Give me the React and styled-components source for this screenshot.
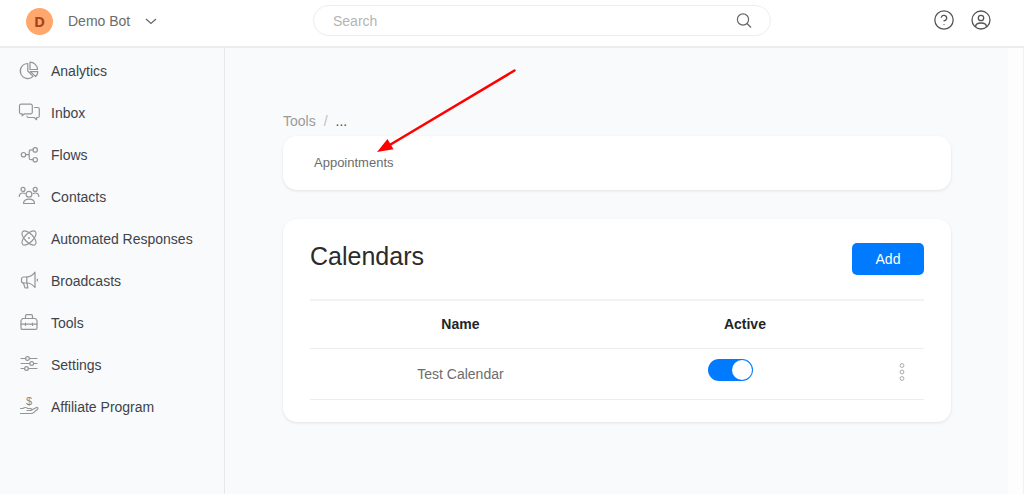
import React, { useState } from 'react'
import styled, { createGlobalStyle, ThemeProvider } from 'styled-components'
import { CircleQuestionMark } from 'lucide-react'

const theme = {
  colors: {
    blue: '#007bff',
    background: '#f9fafc',
    line: '#ededed',
    text: '#3e434a',
    muted: '#6c6c6c',
  },
}

const GlobalStyle = createGlobalStyle`
  *, *:before, *:after {
    box-sizing: border-box;
  }

  body {
    margin: 0;
    font-family: 'Liberation Sans', Arial, sans-serif;
    font-size: 14px;
    line-height: 20px;
    color: ${theme.colors.text};
    background-color: ${theme.colors.background};
  }

  button, input {
    font: inherit;
  }
`

const Page = styled.div`
  min-height: 100vh;
  display: flex;
  flex-direction: column;
`

const Header = styled.header`
  display: grid;
  grid-template-columns: 313px 1fr 253px;
  align-items: start;
  height: 48px;
  padding-top: 5px;
  background-color: #fff;
  border-bottom: 2px solid ${({ theme }) => theme.colors.line};
`

const BotButton = styled.button`
  display: flex;
  align-items: center;
  justify-self: start;
  height: 32px;
  padding: 0 0 0 26px;
  border: 0;
  background: none;
  color: ${({ theme }) => theme.colors.muted};
  cursor: pointer;
`

const Avatar = styled.span`
  width: 27px;
  height: 27px;
  margin-right: 15px;
  border-radius: 50%;
  background-color: #ffa76c;
  color: #a8431f;
  font-family: 'Open Sans', sans-serif;
  font-size: 15px;
  font-weight: 700;
  line-height: 27px;
  text-align: center;
`

const Chevron = styled.svg`
  margin-left: 15px;
`

const SearchForm = styled.form`
  display: flex;
  align-items: center;
  height: 31px;
  padding: 0 18px 0 19px;
  border: 1px solid ${({ theme }) => theme.colors.line};
  border-radius: 16px;
`

const SearchInput = styled.input`
  flex: 1;
  min-width: 0;
  padding: 0;
  border: 0;
  outline: 0;
  background: none;

  &::placeholder {
    color: #b4b4b4;
    opacity: 1;
  }
`

const IconButton = styled.button`
  display: flex;
  padding: 0;
  border: 0;
  background: none;
  color: #545454;
  cursor: pointer;
`

const HeaderActions = styled.div`
  display: flex;
  justify-content: flex-end;
  gap: 15px;
  padding: 4px 32px 0 0;
`

const Body = styled.div`
  flex: 1;
  display: flex;
`

const Sidebar = styled.nav`
  flex: 0 0 225px;
  padding: 11px 0 0 17px;
  border-right: 1px solid #e6e8ea;
`

const NavItem = styled.a`
  display: flex;
  align-items: center;
  gap: 10px;
  margin-bottom: 18px;
  color: inherit;
  text-decoration: none;
`

const NavIcon = styled.svg`
  fill: none;
  stroke: #959595;
  stroke-width: 1.2;
  stroke-linecap: round;
  stroke-linejoin: round;
`

const Dollar = styled.text`
  fill: #858585;
  stroke: none;
  font-size: 11px;
  text-anchor: middle;
`

const Main = styled.main`
  flex: 1;
  min-width: 0;
  padding: 63px 57px 24px 58px;
`

const Gutter = styled.div`
  flex: 0 0 16px;
  background-color: #fdfdfd;
  border-right: 1px solid #f2f2f2;
`

const Breadcrumb = styled.div`
  position: relative;
  display: flex;
  gap: 8px;
  margin-bottom: 5px;
  color: #4f4f4f;
`

const Crumb = styled.a`
  color: #9b9b9b;
  text-decoration: none;
`

const Slash = styled.span`
  color: #c0c0c0;
`

const Arrow = styled.svg`
  position: absolute;
  left: 89px;
  top: -45px;
  pointer-events: none;
`

const Card = styled.section`
  background-color: #fff;
  border-radius: 14px;
  box-shadow: 0 1px 3px rgba(0, 0, 0, 0.1);
`

const TabsCard = styled(Card)`
  padding: 17px 31px;
  margin-bottom: 29px;
`

const Tab = styled.a`
  display: block;
  font-size: 13px;
  color: ${({ theme }) => theme.colors.muted};
  text-decoration: none;
`

const TableCard = styled(Card)`
  padding: 24px 27px 22px;
`

const CardHeader = styled.div`
  display: flex;
  align-items: flex-start;
  justify-content: space-between;
  margin-bottom: 24px;
`

const Title = styled.h1`
  margin: 0;
  font-size: 25px;
  font-weight: 400;
  line-height: 26px;
  color: #2b2b2b;
`

const AddButton = styled.button`
  width: 72px;
  height: 32px;
  border: 0;
  border-radius: 5px;
  background-color: ${({ theme }) => theme.colors.blue};
  color: #fff;
  cursor: pointer;
`

const Table = styled.table`
  width: 100%;
  table-layout: fixed;
  border-collapse: collapse;
  text-align: center;
`

const HeadCell = styled.th`
  width: ${({ width }) => width};
  height: 48px;
  padding: 0 0 1px;
  border-top: 2px solid #f2f2f2;
  border-bottom: 1px solid ${({ theme }) => theme.colors.line};
  color: #212529;
`

const Cell = styled.td`
  height: 51px;
  padding: 0;
  border-bottom: 1px solid ${({ theme }) => theme.colors.line};
  color: ${({ theme }) => theme.colors.muted};
`

const SwitchCell = styled(Cell)`
  padding: 0 28px 8px 0;
`

const MenuCell = styled(Cell)`
  padding-bottom: 4px;
`

const Switch = styled.input`
  appearance: none;
  display: block;
  width: 45px;
  height: 22px;
  margin: 0 auto;
  padding: 1px;
  border-radius: 11px;
  background-color: ${({ checked, theme }) =>
    checked ? theme.colors.blue : '#c8c8c8'};
  cursor: pointer;

  &:before {
    content: '';
    display: block;
    width: 20px;
    height: 20px;
    margin-left: ${({ checked }) => (checked ? 'auto' : '0')};
    border-radius: 50%;
    background-color: #fff;
  }
`

const MenuButton = styled(IconButton)`
  margin: 0 auto;
`

const icons = {
  analytics: (
    <>
      <path d="M10.8 4.5a7.5 7.5 0 1 0 5.3 12.8L10.8 12Z" />
      <path d="M13 3.200a7.500 7.500 0 0 1 7.500 7.300H13Z" />
      <path d="M13.300 12.600h7.600a7.600 7.600 0 0 1-2.200 4.900Z" />
    </>
  ),
  inbox: (
    <>
      <path d="M4 3.2h9.8a1.5 1.5 0 0 1 1.5 1.5v6.6a1.5 1.5 0 0 1-1.5 1.5H7.5l-2.3 2v-2H4a1.5 1.5 0 0 1-1.5-1.5V4.7A1.5 1.5 0 0 1 4 3.2Z" />
      <path d="M17.5 6.5h3.3A1.5 1.5 0 0 1 22.3 8v7a1.5 1.5 0 0 1-1.5 1.5h-1.2v2.2l-2.500-2.200h-5.600a1.500 1.500 0 0 1-1.500-1.500" />
    </>
  ),
  flows: (
    <>
      <circle cx="6.5" cy="11.7" r="2.2" />
      <circle cx="18.2" cy="6.9" r="2.2" />
      <circle cx="18.2" cy="16.7" r="2.2" />
      <path d="M8.7 11.7h3.5M16 6.9h-2a1.8 1.8 0 0 0-1.8 1.8v6.2a1.8 1.8 0 0 0 1.8 1.8h2" />
    </>
  ),
  contacts: (
    <>
      <circle cx="12" cy="9.2" r="2.9" />
      <circle cx="6" cy="4.4" r="2" />
      <circle cx="18.2" cy="4.4" r="2" />
      <path d="M6.5 18.5c0-3 2.3-4.3 5.5-4.3s5.5 1.3 5.5 4.3Z" />
      <path d="M2.3 11.5C2.3 9 3.800 8 5.800 8c.8 0 1.500.1 2 .5M21.800 11.500c0-2.500-1.500-3.500-3.500-3.500-.8 0-1.500.1-2 .5" />
    </>
  ),
  automated: (
    <>
      <ellipse cx="12" cy="11" rx="9" ry="4.2" transform="rotate(45 12 11)" />
      <ellipse cx="12" cy="11" rx="9" ry="4.2" transform="rotate(-45 12 11)" />
      <circle cx="12" cy="11" r=".4" />
    </>
  ),
  broadcasts: (
    <>
      <path d="M9.8 8H6.5a2 2 0 0 0-2 2v2a2 2 0 0 0 2 2h3.3Z" />
      <path d="M9.8 8c3.2 0 6-1.8 8.2-4.8v15.3c-2.2-2.8-5-4.5-8.2-4.5" />
      <path d="M6.5 14l1.2 4.2c.2.5.5.7 1 .7h2.1L10 14M20.300 10v2" />
    </>
  ),
  tools: (
    <>
      <path d="M5.5 7.5h13l1.5 2v7.7a1.2 1.2 0 0 1-1.2 1.2H5.2A1.2 1.2 0 0 1 4 17.2V9.5Z" />
      <path d="M8.5 7.3V5a1.3 1.3 0 0 1 1.3-1.3h4.4A1.3 1.3 0 0 1 15.5 5v2.3" />
      <path d="M4 13.2h16M8.5 12v2.5M15.5 12v2.5" />
    </>
  ),
  settings: (
    <>
      <circle cx="10.5" cy="5.5" r="1.9" />
      <circle cx="14.7" cy="10.5" r="1.9" />
      <circle cx="9.5" cy="15.5" r="1.9" />
      <path d="M4 5.5h4.6M12.4 5.5H20M4 10.5h8.8M16.6 10.5H20M4 15.5h3.6M11.4 15.5H20" />
    </>
  ),
  affiliate: (
    <>
      <Dollar x="12" y="10">
        $
      </Dollar>
      <path d="M3.5 13.5h2.3c1.5-1.2 3.5-1.2 5 0h2.7c1.5 0 1.5 2 0 2H10M13.500 15.500l5.500-2.800c1.500-.7 2.700.5 1.500 1.600l-4.200 3.600c-.6.500-1.200.6-2 .6H3.500" />
    </>
  ),
}

const navItems = [
  { icon: 'analytics', label: 'Analytics' },
  { icon: 'inbox', label: 'Inbox' },
  { icon: 'flows', label: 'Flows' },
  { icon: 'contacts', label: 'Contacts' },
  { icon: 'automated', label: 'Automated Responses' },
  { icon: 'broadcasts', label: 'Broadcasts' },
  { icon: 'tools', label: 'Tools' },
  { icon: 'settings', label: 'Settings' },
  { icon: 'affiliate', label: 'Affiliate Program' },
]

const TopBar = () => (
  <Header>
    <BotButton type="button">
      <Avatar>D</Avatar>
      Demo Bot
      <Chevron width="12" height="8" fill="none" stroke="#666" strokeWidth="1.2">
        <path d="M1 2l5 4.5L11 2" />
      </Chevron>
    </BotButton>
    <SearchForm role="search" onSubmit={e => e.preventDefault()}>
      <SearchInput type="search" placeholder="Search" aria-label="Search" />
      <IconButton type="submit" aria-label="Submit search">
        <svg width="16" height="16" fill="none" stroke="#666" strokeWidth="1.2">
          <circle cx="7" cy="6.5" r="5.6" />
          <path d="M11 10.500l4 4" />
        </svg>
      </IconButton>
    </SearchForm>
    <HeaderActions>
      <IconButton type="button" aria-label="Help">
        <CircleQuestionMark size={22} strokeWidth={1.4} />
      </IconButton>
      <IconButton type="button" aria-label="Account">
        <svg
          width="22"
          height="22"
          fill="none"
          stroke="currentColor"
          strokeWidth="1.3"
        >
          <circle cx="11" cy="11" r="9" />
          <circle cx="11" cy="9" r="2.7" />
          <path d="M5.5 18c0-2.8 2.2-4 5.5-4s5.5 1.2 5.5 4" />
        </svg>
      </IconButton>
    </HeaderActions>
  </Header>
)

const App = () => {
  const [active, setActive] = useState(true)

  return (
    <ThemeProvider theme={theme}>
      <GlobalStyle />
      <Page>
        <TopBar />
        <Body>
          <Sidebar>
            {navItems.map(({ icon, label }) => (
              <NavItem key={label} href="#">
                <NavIcon width="24" height="24" aria-hidden="true">
                  {icons[icon]}
                </NavIcon>
                {label}
              </NavItem>
            ))}
          </Sidebar>
          <Main>
            <Breadcrumb>
              <Crumb href="#">Tools</Crumb>
              <Slash>/</Slash>
              <span>...</span>
              <Arrow width="150" height="90" aria-hidden="true">
                <path
                  d="M142.5 4.5L16 80"
                  stroke="#f00"
                  strokeWidth="2.5"
                  strokeLinecap="round"
                />
                <path d="M5 86L15.5 73L21.5 83.2Z" fill="#f00" />
              </Arrow>
            </Breadcrumb>
            <TabsCard>
              <Tab href="#">Appointments</Tab>
            </TabsCard>
            <TableCard>
              <CardHeader>
                <Title>Calendars</Title>
                <AddButton type="button">Add</AddButton>
              </CardHeader>
              <Table>
                <thead>
                  <tr>
                    <HeadCell width="49%">Name</HeadCell>
                    <HeadCell>Active</HeadCell>
                    <HeadCell width="45px" aria-label="Actions" />
                  </tr>
                </thead>
                <tbody>
                  <tr>
                    <Cell>Test Calendar</Cell>
                    <SwitchCell>
                      <Switch
                        type="checkbox"
                        role="switch"
                        aria-label="Test Calendar active"
                        checked={active}
                        onChange={() => setActive(!active)}
                      />
                    </SwitchCell>
                    <MenuCell>
                      <MenuButton type="button" aria-label="More">
                        <svg width="6" height="20" fill="none" stroke="#aaa">
                          <circle cx="3" cy="3.5" r="1.9" />
                          <circle cx="3" cy="10" r="1.9" />
                          <circle cx="3" cy="16.5" r="1.9" />
                        </svg>
                      </MenuButton>
                    </MenuCell>
                  </tr>
                </tbody>
              </Table>
            </TableCard>
          </Main>
          <Gutter />
        </Body>
      </Page>
    </ThemeProvider>
  )
}

export default App
